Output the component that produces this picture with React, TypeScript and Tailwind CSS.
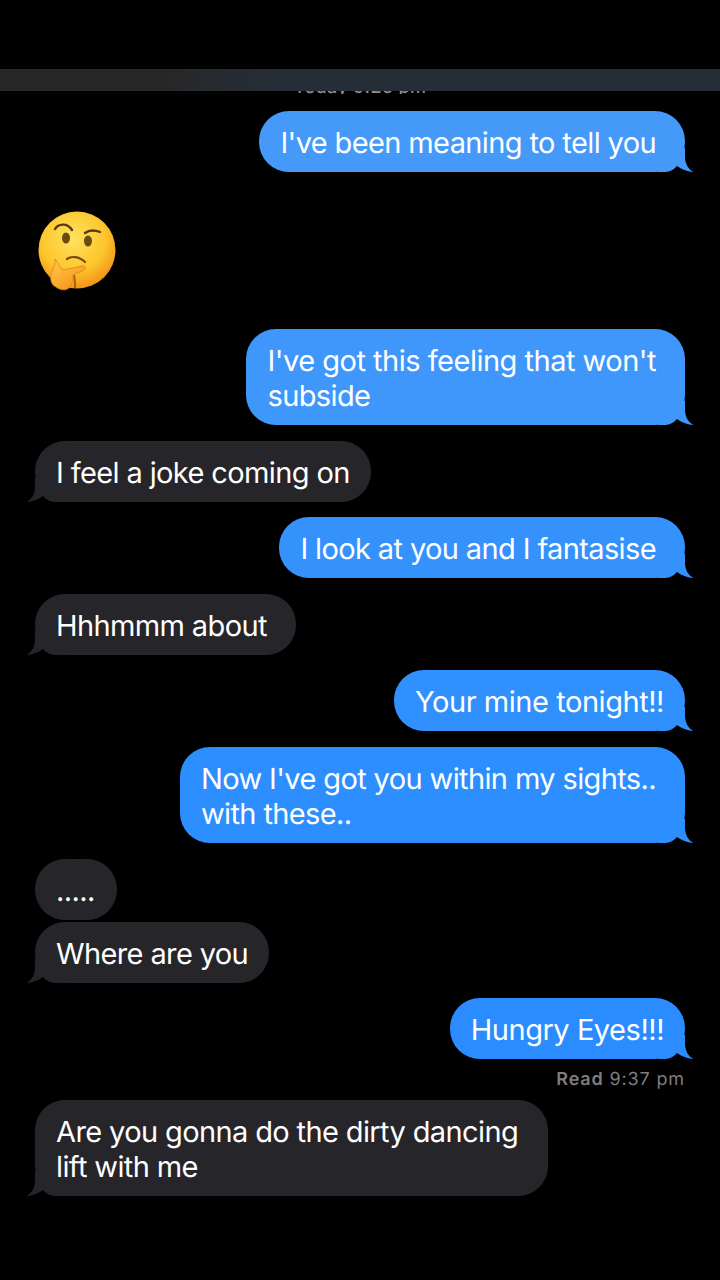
const font = "font-['Inter','Liberation_Sans',sans-serif] [text-rendering:geometricPrecision]";
const tailPath = 'M0 0 H27 V10 C27.5 16 30 21 35.5 24 C30 24 24 21.5 19 18 C16 21 13 23.5 8 24 H0 Z';

function Tail({ side, color }: { side: 'left' | 'right'; color: string }) {
  return (
    <svg
      className={side === 'right' ? 'absolute right-[-9px] bottom-0' : 'absolute bottom-0 left-[-9px] -scale-x-100'}
      width="36"
      height="24"
      viewBox="0 0 36 24"
    >
      <path d={tailPath} fill={color} />
    </svg>
  );
}

function Sent({ text, color, bg, className }: { text: React.ReactNode; color: string; bg: string; className: string }) {
  return (
    <div className={`relative self-end rounded-[30px] pt-[14px] pb-[12px] pl-[21px] text-[29px] leading-[35px] tracking-[-0.62px] text-white ${bg} ${className}`}>
      <span className="relative z-10">{text}</span>
      <Tail side="right" color={color} />
    </div>
  );
}

function Received({ text, tail = true, className }: { text: React.ReactNode; tail?: boolean; className: string }) {
  return (
    <div className={`relative self-start rounded-[30px] bg-[#26252a] pt-[14px] pb-[12px] pl-[21px] text-[29px] leading-[35px] tracking-[-0.62px] text-white ${className}`}>
      <span className="relative z-10">{text}</span>
      {tail && <Tail side="left" color="#26252a" />}
    </div>
  );
}

function ThinkingFace() {
  return (
    <svg className="block" width="80" height="84" viewBox="0 0 80 84">
      <defs>
        <radialGradient id="face" cx="0.45" cy="0.35" r="0.7">
          <stop offset="0" stopColor="#ffe25e" />
          <stop offset="0.6" stopColor="#fdc62c" />
          <stop offset="1" stopColor="#ee8a12" />
        </radialGradient>
        <linearGradient id="hand" x1="0" y1="0" x2="0.8" y2="1">
          <stop offset="0" stopColor="#ffc850" />
          <stop offset="0.5" stopColor="#ffae33" />
          <stop offset="1" stopColor="#f2901a" />
        </linearGradient>
      </defs>
      <circle cx="40" cy="41" r="38.5" fill="url(#face)" />
      <path d="M18 20 C21 15 30 13 35 21" fill="none" stroke="#5a3a14" strokeWidth="2.4" strokeLinecap="round" />
      <path d="M48 24 C52 21 58 21 63 23" fill="none" stroke="#5a3a14" strokeWidth="2.4" strokeLinecap="round" />
      <ellipse cx="29" cy="29" rx="4" ry="5.5" fill="#6b4a16" />
      <ellipse cx="51" cy="32" rx="4" ry="5.5" fill="#6b4a16" />
      <path d="M30 50 C34 47 42 47 48 53" fill="none" stroke="#7a4a12" strokeWidth="2.2" strokeLinecap="round" />
      <path d="M37 66 C38 70 38 75 38 79" fill="none" stroke="#a85f10" strokeWidth="2" />
      <path
        d="M18 50 C20 52 22 57 26 61 C32 60 40 58 46 57 C49 57 49 60 47 61 C43 63 39 65 36 66 C36 71 35 77 32 79 C28 82 23 81 19 78 C15 76 13 72 14 66 C15 60 19 56 18 50 Z"
        fill="url(#hand)"
        stroke="#dd8512"
        strokeWidth="0.8"
      />
    </svg>
  );
}

export default function App() {
  return (
    <div className={`flex h-[1280px] w-[720px] flex-col overflow-hidden bg-black ${font}`}>
      <div className="mt-[69px] h-[22px] w-full shrink-0 bg-gradient-to-r from-[#272727] from-[22%] to-[#252d37] to-[38%]" />
      {/* timestamp mostly hidden behind the bar */}
      <div className="flex h-[3px] shrink-0 justify-center overflow-hidden">
        <span className="mt-[-14px] text-[18px] leading-[22px] font-medium tracking-[0.3px] text-[#8e8e93]">Today 9:26 pm</span>
      </div>
      <div className="flex flex-col px-[35px]">
        <Sent text="I've been meaning to tell you" color="#4499f9" bg="bg-[#4499f9]" className="mt-[17px] pr-[29px]" />
        <div className="mt-[37px] ml-[2px] self-start">
          <ThinkingFace />
        </div>
        <Sent
          text={<><span className="tracking-[-0.5px]">I've got this feeling that won't</span><br />subside</>}
          color="#3f97fb"
          bg="bg-[#3f97fb]"
          className="mt-[36px] pr-[29px]"
        />
        <Received text="I feel a joke coming on" className="mt-[16px] pr-[21px]" />
        <Sent text="I look at you and I fantasise" color="#3592fd" bg="bg-[#3592fd]" className="mt-[15px] pr-[29px]" />
        <Received text="Hhhmmm about" className="mt-[16px] pr-[29px]" />
        <Sent text={<span className="tracking-[-0.45px]">Your mine tonight!!</span>} color="#2f90fe" bg="bg-[#2f90fe]" className="mt-[15px] pr-[21px]" />
        <Sent
          text={<>Now I've got you within my sights..<br />with these..</>}
          color="#2c8eff"
          bg="bg-[#2c8eff]"
          className="mt-[16px] pr-[29px]"
        />
        <Received text="....." tail={false} className="mt-[16px] pr-[22px]" />
        <Received text="Where are you" className="mt-[2px] pr-[21px]" />
        <Sent text={<span className="tracking-[-0.47px]">Hungry Eyes!!!</span>} color="#2a8cff" bg="bg-[#2a8cff]" className="mt-[15px] pr-[21px]" />
        <div className="mt-[10px] self-end text-[18px] leading-[22px] tracking-[0.85px] text-[#7d7d82]">
          <span className="font-semibold">Read</span> 9:37 pm
        </div>
        <Received
          text={<>Are you gonna do the dirty dancing<br />lift with me</>}
          className="mt-[9px] pr-[30px]"
        />
      </div>
    </div>
  );
}
